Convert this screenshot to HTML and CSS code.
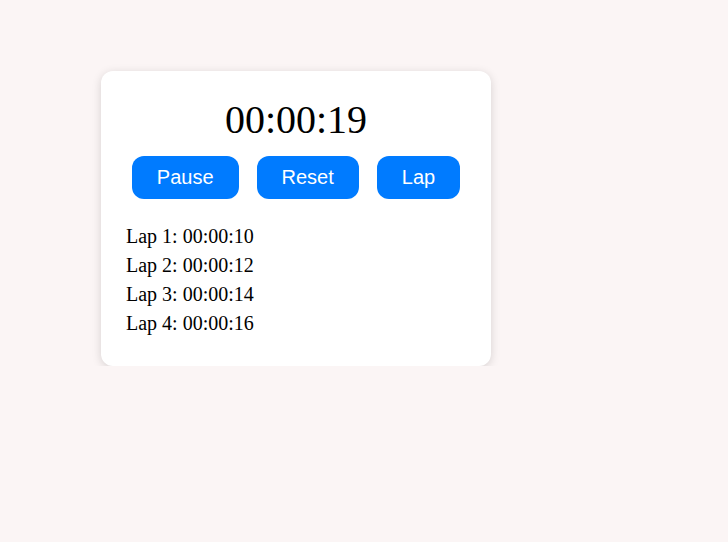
FILE: index.html
```html
<!DOCTYPE html>
<html>
<head>
<meta charset="utf-8">
<link rel="stylesheet" href="styles.css">
</head>
<body>
<div class="page">
  <div class="card">
    <div class="timer">00:00:19</div>
    <div class="controls">
      <button class="btn">Pause</button>
      <button class="btn">Reset</button>
      <button class="btn">Lap</button>
    </div>
    <ul class="laps">
      <li>Lap 1: 00:00:10</li>
      <li>Lap 2: 00:00:12</li>
      <li>Lap 3: 00:00:14</li>
      <li>Lap 4: 00:00:16</li>
    </ul>
  </div>
</div>
</body>
</html>
```
FILE: styles.css
```css
html, body {
  margin: 0;
  padding: 0;
  background: #fbf5f5;
  font-family: "Liberation Serif", "Times New Roman", serif;
}
.page {
  padding: 71px 0 0 101px;
}
.card {
  width: 390px;
  box-sizing: border-box;
  background: #ffffff;
  border-radius: 12px;
  box-shadow: 0 2px 10px rgba(0, 0, 0, 0.15);
  padding: 26px 25px 25px 25px;
}
.timer {
  font-size: 40px;
  line-height: 46px;
  text-align: center;
  color: #000;
}
.controls {
  display: flex;
  justify-content: center;
  gap: 18px;
  margin-top: 13px;
}
.btn {
  font-family: "Liberation Sans", Arial, sans-serif;
  font-size: 20px;
  line-height: 23px;
  padding: 10px 25px;
  border: none;
  border-radius: 12px;
  background: #007bff;
  color: #fff;
}
.laps {
  list-style: none;
  margin: 26px 0 0 0;
  padding: 0;
}
.laps li {
  font-size: 20px;
  line-height: 23px;
  margin-bottom: 6px;
  color: #000;
}
```
